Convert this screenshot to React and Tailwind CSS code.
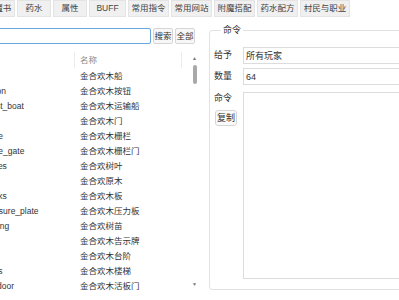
import React from "react";

const tabs = [
  ["附魔书", "w-[33px]"],
  ["药水", "w-[34px]"],
  ["属性", "w-[34px]"],
  ["BUFF", "w-[37px]"],
  ["常用指令", "w-[41px]"],
  ["常用网站", "w-[41px]"],
  ["附魔搭配", "w-[41px]"],
  ["药水配方", "w-[41px]"],
  ["村民与职业", "w-[50px]"],
];

const items = [
  ["acacia_boat", "金合欢木船"],
  ["acacia_button", "金合欢木按钮"],
  ["acacia_chest_boat", "金合欢木运输船"],
  ["acacia_door", "金合欢木门"],
  ["acacia_fence", "金合欢木栅栏"],
  ["acacia_fence_gate", "金合欢木栅栏门"],
  ["acacia_leaves", "金合欢树叶"],
  ["acacia_log", "金合欢原木"],
  ["acacia_planks", "金合欢木板"],
  ["acacia_pressure_plate", "金合欢木压力板"],
  ["acacia_sapling", "金合欢树苗"],
  ["acacia_sign", "金合欢木告示牌"],
  ["acacia_slab", "金合欢木台阶"],
  ["acacia_stairs", "金合欢木楼梯"],
  ["acacia_trapdoor", "金合欢木活板门"],
];

export default function App() {
  return (
    <div className="w-[399px] h-[300px] overflow-hidden bg-white text-[#333] font-['Liberation_Sans','Noto_Sans_CJK_SC',sans-serif]">
      {/* tab bar, scrolled a bit to the left */}
      <div className="flex gap-[2px] ml-[-18px] h-[17px]">
        {tabs.map(([t, w]) => (
          <div
            key={t}
            className={`${w} shrink-0 flex items-center justify-center bg-[#f0f0f0] border border-[#e4e4e4] text-[8.5px] leading-none text-[#444]`}
          >
            {t}
          </div>
        ))}
      </div>

      <div className="flex items-start">
        {/* LEFT: search + item list */}
        <div className="ml-[-49px] w-[248px] shrink-0 flex flex-col">
          <div className="flex items-center gap-[2px] pr-[4px] mt-[11px]">
            <input
              className="flex-1 min-w-0 h-[16px] border border-[#6aa6de] rounded-[2px] outline-none"
              defaultValue=""
            />
            <button className="w-[20px] h-[16px] border border-[#d6d6d6] rounded-[2px] bg-[#f7f7f7] text-[8.5px] leading-none">
              搜索
            </button>
            <button className="w-[20px] h-[16px] border border-[#d6d6d6] rounded-[2px] bg-[#f7f7f7] text-[8.5px] leading-none">
              全部
            </button>
          </div>

          <div className="flex mt-[7px] h-[239px]">
            <div className="flex-1 min-w-0 text-[8.5px]">
              <div className="flex h-[18px] items-center">
                <div className="w-[124px] h-[16px] border-r border-[#ececec]" />
                <div className="w-[107px] h-[16px] pl-[5px] flex items-center text-[#8a8a8a] border-r border-[#ececec]">
                  名称
                </div>
              </div>
              {items.map(([id, name]) => (
                <div key={id} className="flex h-[15px] items-center leading-none">
                  <div className="w-[124px] pl-[2px] whitespace-nowrap overflow-hidden">{id}</div>
                  <div className="pl-[5px] whitespace-nowrap">{name}</div>
                </div>
              ))}
            </div>

            {/* scrollbar */}
            <div className="w-[9px] flex flex-col items-center">
              <div className="mt-[5px] text-[5px] leading-none text-[#777]">▲</div>
              <div className="mt-[4px] w-[4px] h-[19px] rounded-full bg-[#a9a9a9]" />
              <div className="mt-auto mb-[3px] text-[5px] leading-none text-[#777]">▼</div>
            </div>
          </div>
        </div>

        {/* RIGHT: command fieldset */}
        <fieldset className="ml-[10px] mt-[7px] w-[230px] shrink-0 border border-[#e2e2e2] rounded-[3px] pt-[11px] pl-[4px] pb-[10px]">
          <legend className="ml-[7px] px-[2px] text-[9px] leading-[12px]">命令</legend>
          <div className="flex items-center">
            <span className="w-[29px] text-[9px]">给予</span>
            <input
              className="flex-1 h-[17px] border border-[#dcdcdc] px-[2px] text-[9px] outline-none"
              defaultValue="所有玩家"
            />
          </div>
          <div className="flex items-center mt-[4px]">
            <span className="w-[29px] text-[9px]">数量</span>
            <input
              className="flex-1 h-[17px] border border-[#dcdcdc] px-[2px] text-[9px] outline-none"
              defaultValue="64"
            />
          </div>
          <div className="flex mt-[7px]">
            <div className="w-[29px] flex flex-col items-start">
              <span className="text-[9px] leading-[12px]">命令</span>
              <button className="mt-[6px] ml-[1px] w-[22px] h-[16px] border border-[#d6d6d6] rounded-[3px] bg-[#fafafa] text-[9px] leading-none">
                复制
              </button>
            </div>
            <textarea className="flex-1 h-[187px] border border-[#dcdcdc] resize-none outline-none" />
          </div>
        </fieldset>
      </div>
    </div>
  );
}
